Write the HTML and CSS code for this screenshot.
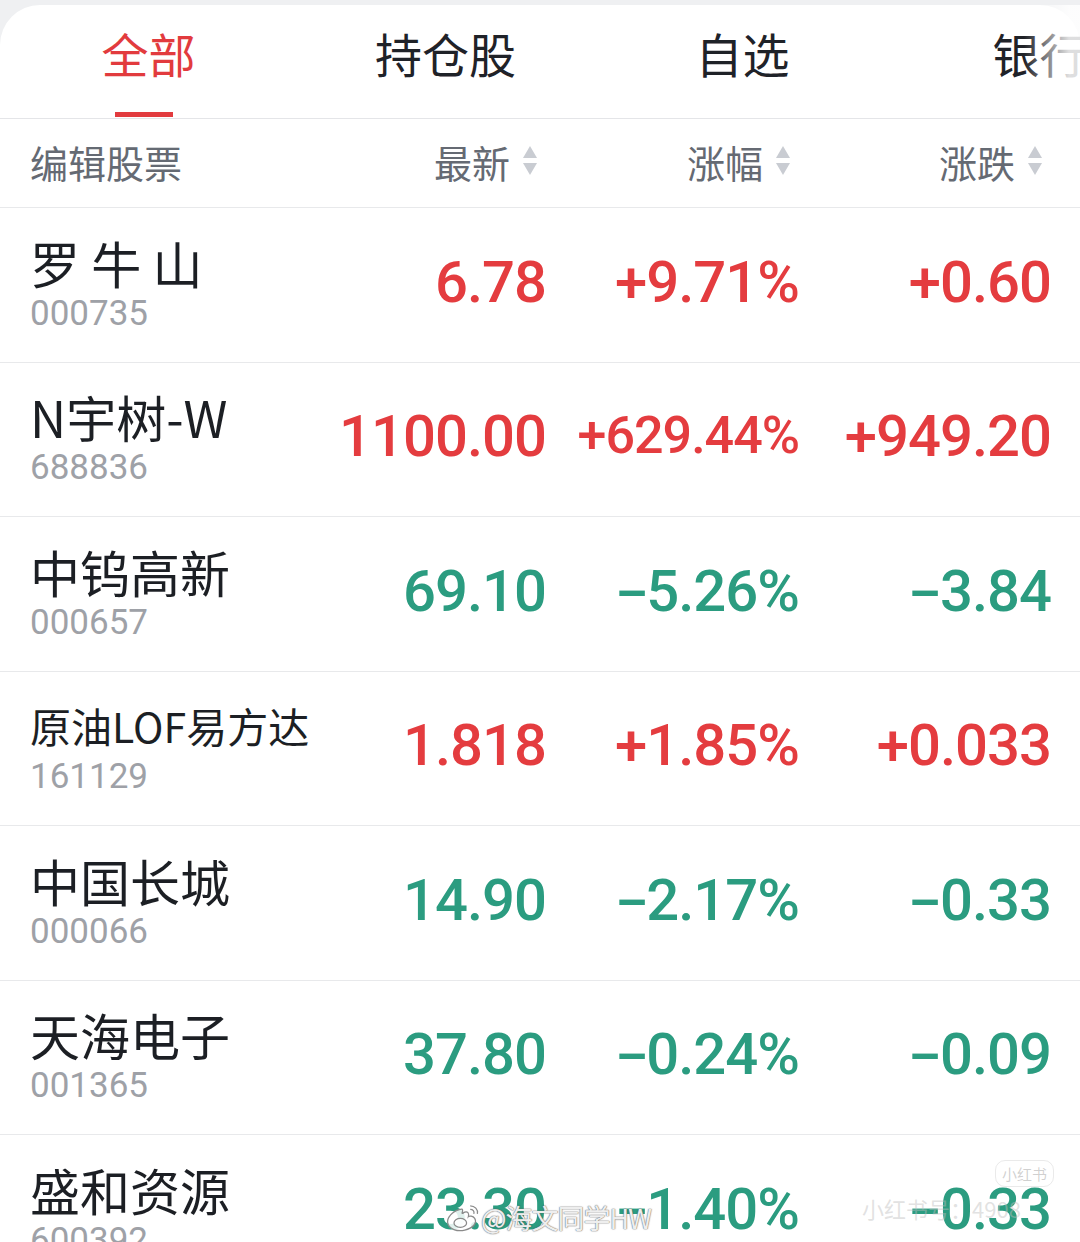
FILE: index.html
```html
<!DOCTYPE html>
<html lang="zh-CN">
<head>
<meta charset="utf-8">
<title>自选股</title>
<link rel="stylesheet" href="styles.css">
</head>
<body>
<div class="card">
  <nav class="tabs">
    <div class="tab active">全部</div>
    <div class="tab">持仓股</div>
    <div class="tab">自选</div>
    <div class="tab">银行</div>
  </nav>

  <div class="grid head">
    <div class="hname">编辑股票</div>
    <div class="hcol">最新<svg class="sort" viewBox="0 0 16 32"><path d="M8 1 L15 13 H1 Z"/><path d="M1 18 H15 L8 30 Z"/></svg></div>
    <div class="hcol">涨幅<svg class="sort" viewBox="0 0 16 32"><path d="M8 1 L15 13 H1 Z"/><path d="M1 18 H15 L8 30 Z"/></svg></div>
    <div class="hcol">涨跌<svg class="sort" viewBox="0 0 16 32"><path d="M8 1 L15 13 H1 Z"/><path d="M1 18 H15 L8 30 Z"/></svg></div>
  </div>

  <div class="grid row up">
    <div class="info"><div class="name">罗 牛 山</div><div class="code">000735</div></div>
    <div class="num">6.78</div><div class="num">+9.71%</div><div class="num">+0.60</div>
  </div>
  <div class="grid row up">
    <div class="info"><div class="name">N宇树-W</div><div class="code">688836</div></div>
    <div class="num">1100.00</div><div class="num sm">+629.44%</div><div class="num">+949.20</div>
  </div>
  <div class="grid row dn">
    <div class="info"><div class="name">中钨高新</div><div class="code">000657</div></div>
    <div class="num">69.10</div><div class="num"><span class="sg">-</span>5.26%</div><div class="num"><span class="sg">-</span>3.84</div>
  </div>
  <div class="grid row up">
    <div class="info"><div class="name long">原油LOF易方达</div><div class="code">161129</div></div>
    <div class="num">1.818</div><div class="num">+1.85%</div><div class="num">+0.033</div>
  </div>
  <div class="grid row dn">
    <div class="info"><div class="name">中国长城</div><div class="code">000066</div></div>
    <div class="num">14.90</div><div class="num"><span class="sg">-</span>2.17%</div><div class="num"><span class="sg">-</span>0.33</div>
  </div>
  <div class="grid row dn">
    <div class="info"><div class="name">天海电子</div><div class="code">001365</div></div>
    <div class="num">37.80</div><div class="num"><span class="sg">-</span>0.24%</div><div class="num"><span class="sg">-</span>0.09</div>
  </div>
  <div class="grid row dn">
    <div class="info"><div class="name">盛和资源</div><div class="code">600392</div></div>
    <div class="num">23.30</div><div class="num"><span class="sg">-</span>1.40%</div><div class="num"><span class="sg">-</span>0.33</div>
  </div>
</div>

<div class="wm">
  <svg class="wb" viewBox="0 0 40 34"><path d="M17 8 C8 10 2 17 3 23 C4 30 14 33 22 31 C31 29 36 23 33 18 C31 15 27 15 26 16 C27 12 25 10 22 11 C20 12 19 13 19 12 C20 9 20 7 17 8 Z"/><ellipse cx="17" cy="23" rx="7" ry="5"/><path d="M28 4 C33 4 37 8 36 13 M28 8 C31 8 33 10 32 13"/></svg>
  <span>@海文同学HW</span>
</div>
<div class="xhs-badge">小红书</div>
<div class="xhs">小红书号：4908</div>
</body>
</html>
```

FILE: styles.css
```css
html, body {
  margin: 0;
  padding: 0;
}

body {
  width: 1080px;
  height: 1242px;
  overflow: hidden;
  position: relative;
  background: #eff0f2;
  font-family: "Noto Sans CJK SC", "Noto Sans", sans-serif;
}

.card {
  margin-top: 5px;
  background: #ffffff;
  border-radius: 40px 40px 0 0;
  min-height: 1237px;
}

/* ---------- tabs ---------- */
.tabs {
  display: flex;
  height: 113px;
  border-bottom: 1px solid #e4e5e8;
  position: relative;
  overflow: hidden;
}

.tabs::after {
  content: "";
  position: absolute;
  top: 0;
  right: 0;
  bottom: 0;
  width: 56px;
  background: linear-gradient(to right, rgba(255, 255, 255, 0), rgba(255, 255, 255, 0.85) 80%);
}

.tab {
  flex: 0 0 297px;
  text-align: center;
  font-size: 47px;
  line-height: 96px;
  color: #1f2228;
  position: relative;
}

.tab.active {
  color: #e23b3e;
}

.tab.active::after {
  content: "";
  position: absolute;
  left: 50%;
  top: 107px;
  width: 58px;
  height: 5px;
  margin-left: -34px;
  background: #e23b3e;
}

/* ---------- grid ---------- */
.grid {
  display: grid;
  grid-template-columns: minmax(0, 1fr) 253px 253px 252px;
  padding: 0 30px;
}

.head {
  height: 89px;
  align-items: center;
  border-bottom: 1px solid #e8e9eb;
  font-size: 38px;
  color: #656a73;
  padding-bottom: 4px;
  box-sizing: border-box;
}

.hcol {
  display: flex;
  justify-content: flex-end;
  align-items: center;
  gap: 12px;
  padding-right: 7px;
}

.sort {
  width: 16px;
  height: 32px;
  fill: #c9ccd2;
}

.row {
  height: 154.5px;
  box-sizing: border-box;
  border-bottom: 1px solid #e8e9eb;
  align-items: center;
}

.info {
  white-space: nowrap;
}

.name {
  font-size: 50px;
  line-height: 52px;
  color: #1c1f24;
}

.name.long {
  font-size: 41px;
}

.code {
  margin-top: 6px;
  font-family: Roboto, "Noto Sans", sans-serif;
  font-size: 35px;
  line-height: 40px;
  color: #9ea1a7;
}

.num {
  font-family: Roboto, "Noto Sans", sans-serif;
  font-weight: 500;
  font-size: 58px;
  line-height: 1;
  letter-spacing: -1px;
  margin-right: -1px;
  text-align: right;
  padding-bottom: 6px;
  white-space: nowrap;
}

.num.sm {
  font-size: 52px;
}

.sg {
  display: inline-block;
  transform: scaleX(1.7);
  margin: 0 6px 0 5px;
}

.up .num {
  color: #e43c3f;
}

.dn .num {
  color: #2b9c80;
}

/* ---------- watermarks ---------- */
.wm {
  position: absolute;
  left: 445px;
  top: 1198px;
  display: flex;
  align-items: center;
  gap: 0;
  font-size: 27px;
  letter-spacing: -1px;
  color: rgba(255, 255, 255, 0.9);
  text-shadow: 0 0 1px #777, 0 0 1px #777, 0 0 2px rgba(0, 0, 0, 0.25);
}

.wb {
  width: 36px;
  height: 31px;
  fill: rgba(255, 255, 255, 0.85);
  stroke: #8a8a8a;
  stroke-width: 1.4;
}

.xhs-badge {
  position: absolute;
  left: 995px;
  top: 1160px;
  padding: 2px 6px;
  border-radius: 10px;
  font-size: 15px;
  color: rgba(120, 120, 120, 0.35);
  border: 1px solid rgba(150, 150, 150, 0.2);
}

.xhs {
  position: absolute;
  left: 862px;
  top: 1192px;
  font-size: 22px;
  color: rgba(190, 190, 190, 0.45);
}
```
